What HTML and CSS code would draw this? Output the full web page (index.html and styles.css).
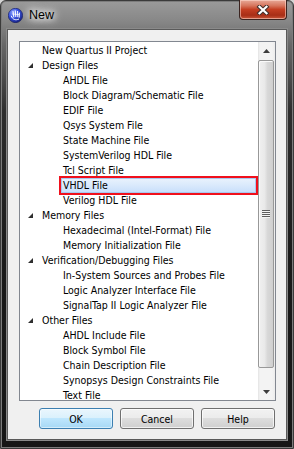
FILE: index.html
```html
<!DOCTYPE html>
<html>
<head>
<meta charset="utf-8">
<link rel="stylesheet" href="styles.css">
</head>
<body>
<div class="window">
  <div class="titlebar">
    <svg class="appicon" viewBox="0 0 15 15" width="15" height="15">
      <defs>
        <radialGradient id="ig" cx="0.35" cy="0.3" r="0.75">
          <stop offset="0" stop-color="#8fa6ff"/>
          <stop offset="0.5" stop-color="#3650e0"/>
          <stop offset="1" stop-color="#16207e"/>
        </radialGradient>
      </defs>
      <circle cx="7.5" cy="7.5" r="7.2" fill="url(#ig)" stroke="#0e165c" stroke-width="0.6"/>
      <g fill="none" stroke="#fff" stroke-width="1" stroke-linecap="round">
        <path d="M5 3.5 L5.8 9"/>
        <path d="M7.3 2.8 L7.8 8.6"/>
        <path d="M9.6 3.4 L9.8 8.8"/>
        <path d="M11.4 5 L11.2 9.3"/>
        <path d="M3.4 8.2 C4.5 11.5 7.5 12.6 10.6 11.2"/>
        <path d="M4.5 6 L10.8 6.6" stroke-width="0.7"/>
      </g>
    </svg>
    <span class="title">New</span>
    <div class="close">
      <svg viewBox="0 0 14 10" width="14" height="10">
        <path d="M3.5 1.8 L10.5 8.2 M10.5 1.8 L3.5 8.2" stroke="#43312d" stroke-width="4.2" stroke-linecap="square" fill="none"/>
        <path d="M3.5 1.8 L10.5 8.2 M10.5 1.8 L3.5 8.2" stroke="#ffffff" stroke-width="2.2" stroke-linecap="square" fill="none"/>
      </svg>
    </div>
  </div>
  <div class="client">
    <div class="listbox">
      <div class="tree">
        <div class="row l0"><span class="twisty"></span><span class="label">New Quartus II Project</span></div>
        <div class="row l0"><span class="twisty"><svg viewBox="0 0 5 5" width="5" height="5"><polygon points="5,0 5,5 0,5" fill="#2f2f2f"/></svg></span><span class="label">Design Files</span></div>
        <div class="row l1"><span class="twisty"></span><span class="label">AHDL File</span></div>
        <div class="row l1"><span class="twisty"></span><span class="label">Block Diagram/Schematic File</span></div>
        <div class="row l1"><span class="twisty"></span><span class="label">EDIF File</span></div>
        <div class="row l1"><span class="twisty"></span><span class="label">Qsys System File</span></div>
        <div class="row l1"><span class="twisty"></span><span class="label">State Machine File</span></div>
        <div class="row l1"><span class="twisty"></span><span class="label">SystemVerilog HDL File</span></div>
        <div class="row l1"><span class="twisty"></span><span class="label">Tcl Script File</span></div>
        <div class="row l1 sel"><span class="twisty"></span><span class="label">VHDL File</span></div>
        <div class="row l1"><span class="twisty"></span><span class="label">Verilog HDL File</span></div>
        <div class="row l0"><span class="twisty"><svg viewBox="0 0 5 5" width="5" height="5"><polygon points="5,0 5,5 0,5" fill="#2f2f2f"/></svg></span><span class="label">Memory Files</span></div>
        <div class="row l1"><span class="twisty"></span><span class="label">Hexadecimal (Intel-Format) File</span></div>
        <div class="row l1"><span class="twisty"></span><span class="label">Memory Initialization File</span></div>
        <div class="row l0"><span class="twisty"><svg viewBox="0 0 5 5" width="5" height="5"><polygon points="5,0 5,5 0,5" fill="#2f2f2f"/></svg></span><span class="label">Verification/Debugging Files</span></div>
        <div class="row l1"><span class="twisty"></span><span class="label">In-System Sources and Probes File</span></div>
        <div class="row l1"><span class="twisty"></span><span class="label">Logic Analyzer Interface File</span></div>
        <div class="row l1"><span class="twisty"></span><span class="label">SignalTap II Logic Analyzer File</span></div>
        <div class="row l0"><span class="twisty"><svg viewBox="0 0 5 5" width="5" height="5"><polygon points="5,0 5,5 0,5" fill="#2f2f2f"/></svg></span><span class="label">Other Files</span></div>
        <div class="row l1"><span class="twisty"></span><span class="label">AHDL Include File</span></div>
        <div class="row l1"><span class="twisty"></span><span class="label">Block Symbol File</span></div>
        <div class="row l1"><span class="twisty"></span><span class="label">Chain Description File</span></div>
        <div class="row l1"><span class="twisty"></span><span class="label">Synopsys Design Constraints File</span></div>
        <div class="row l1"><span class="twisty"></span><span class="label">Text File</span></div>
      </div>
      <div class="vscroll">
        <div class="sb-btn">
          <svg viewBox="0 0 7 4" width="7" height="4"><polygon points="3.5,0 7,4 0,4" fill="#3c3c3c"/></svg>
        </div>
        <div class="sb-track">
          <div class="thumb">
            <svg class="grip" viewBox="0 0 8 8" width="8" height="8">
              <g stroke-width="1">
                <path d="M0 0.5 H8 M0 2.5 H8 M0 4.5 H8 M0 6.5 H8" stroke="#5e5e5e"/>
                <path d="M0 1.5 H8 M0 3.5 H8 M0 5.5 H8 M0 7.5 H8" stroke="#f4f4f4"/>
              </g>
            </svg>
          </div>
        </div>
        <div class="sb-btn">
          <svg viewBox="0 0 7 4" width="7" height="4"><polygon points="0,0 7,0 3.5,4" fill="#3c3c3c"/></svg>
        </div>
      </div>
    </div>
    <div class="buttons">
      <button class="btn default">OK</button>
      <button class="btn">Cancel</button>
      <button class="btn">Help</button>
    </div>
  </div>
</div>
</body>
</html>
```

FILE: styles.css
```css
* { box-sizing: border-box; }
html, body { margin: 0; padding: 0; }
body {
  width: 294px;
  height: 449px;
  overflow: hidden;
  background: #d4d4d4;
  font-family: "DejaVu Sans Condensed", "Liberation Sans", Arial, sans-serif;
}
.window {
  width: 294px;
  height: 449px;
  border: 1px solid #3a3a3a;
  border-radius: 6px 6px 0 0;
  background: linear-gradient(to bottom, #9a9a9a 0, #878787 20px, #666 45px, #2e2e2e 110px, #1a1a1a 260px, #161616 100%);
  display: flex;
  flex-direction: column;
  box-shadow: inset 0 0 0 1px #7c7c7c;
}
.titlebar {
  height: 28px;
  flex: none;
  display: flex;
  align-items: center;
}
.appicon {
  margin-left: 7px;
  flex: none;
}
.title {
  margin-left: 6px;
  font-family: "Liberation Sans", Arial, sans-serif;
  font-size: 12.5px;
  color: #000;
  text-shadow: 0 0 6px #fff, 0 0 10px #fff, 0 0 12px rgba(255,255,255,0.9);
}
.close {
  margin-left: auto;
  margin-right: 6px;
  align-self: flex-start;
  margin-top: -1px;
  width: 48px;
  height: 20px;
  border: 1px solid #3b2420;
  border-top: none;
  border-radius: 0 0 4px 4px;
  background: linear-gradient(to bottom, #e8a999 0, #d6755d 30%, #c43e22 50%, #a82e16 80%, #c9573a 100%);
  box-shadow: inset 0 0 0 1px rgba(255,220,210,0.55);
  display: flex;
  align-items: center;
  justify-content: center;
}
.client {
  flex: 1;
  margin: 0 6px 8px;
  border: 1px solid #5a5a5a;
  box-shadow: 0 0 0 1px #8a8a8a;
  background: #f0f0f0;
  padding: 11px 10px 10px 11px;
  display: flex;
  flex-direction: column;
}
.listbox {
  height: 360px;
  flex: none;
  border: 1px solid #828790;
  background: #fff;
  display: flex;
}
.tree {
  flex: 1;
  padding-top: 1px;
  overflow: hidden;
}
.row {
  height: 15px;
  display: flex;
  align-items: center;
  font-size: 10.5px;
  color: #000;
  white-space: nowrap;
  padding-left: 8px;
}
.row.l1 { padding-left: 29px; }
.twisty {
  width: 14px;
  flex: none;
  display: flex;
  align-items: center;
}
.twisty svg { display: block; }
.label {
  line-height: 15px;
}
.row.sel .label {
  flex: 1;
  margin-left: -2px;
  padding-left: 2px;
  margin-right: 2px;
  background: linear-gradient(to bottom, #eaf3fd 0, #d9e9fc 50%, #c6defb 100%);
  box-shadow: inset 0 0 0 1px #a8c8ef;
  outline: 2px solid #f0101c;
}
.vscroll {
  width: 17px;
  flex: none;
  display: flex;
  flex-direction: column;
  background: linear-gradient(to right, #e3e3e3 0, #f3f3f3 2px, #f3f3f3 14px, #ececec 17px);
}
.sb-btn {
  height: 17px;
  flex: none;
  display: flex;
  align-items: center;
  justify-content: center;
}
.sb-btn svg { display: block; }
.sb-track {
  flex: 1;
}
.thumb {
  margin: 1px 1px 0 0;
  height: 308px;
  border: 1px solid #989898;
  border-radius: 2px;
  background: linear-gradient(to right, #f0f0f0 0, #e9e9e9 40%, #d8d8d8 60%, #cfcfcf 100%);
  box-shadow: inset 1px 1px 0 #fafafa;
  display: flex;
  align-items: center;
  justify-content: center;
}
.grip { display: block; }
.buttons {
  margin-top: 7px;
  display: flex;
  justify-content: flex-end;
  gap: 7px;
  padding-right: 1px;
}
.btn {
  width: 74px;
  height: 21px;
  padding: 0;
  margin: 0;
  border: 1px solid #707070;
  border-radius: 3px;
  background: linear-gradient(to bottom, #f2f2f2 0, #ebebeb 50%, #dddddd 50%, #cfcfcf 100%);
  box-shadow: inset 0 0 0 1px rgba(255,255,255,0.7);
  font-family: "DejaVu Sans Condensed", "Liberation Sans", Arial, sans-serif;
  font-size: 10.5px;
  color: #000;
}
.btn.default {
  border-color: #3c7fb1;
  background: linear-gradient(to bottom, #eaf6fd 0, #d9f0fc 50%, #bee6fd 50%, #a7d9f5 100%);
  box-shadow: inset 0 0 0 1px rgba(255,255,255,0.5);
}
```
